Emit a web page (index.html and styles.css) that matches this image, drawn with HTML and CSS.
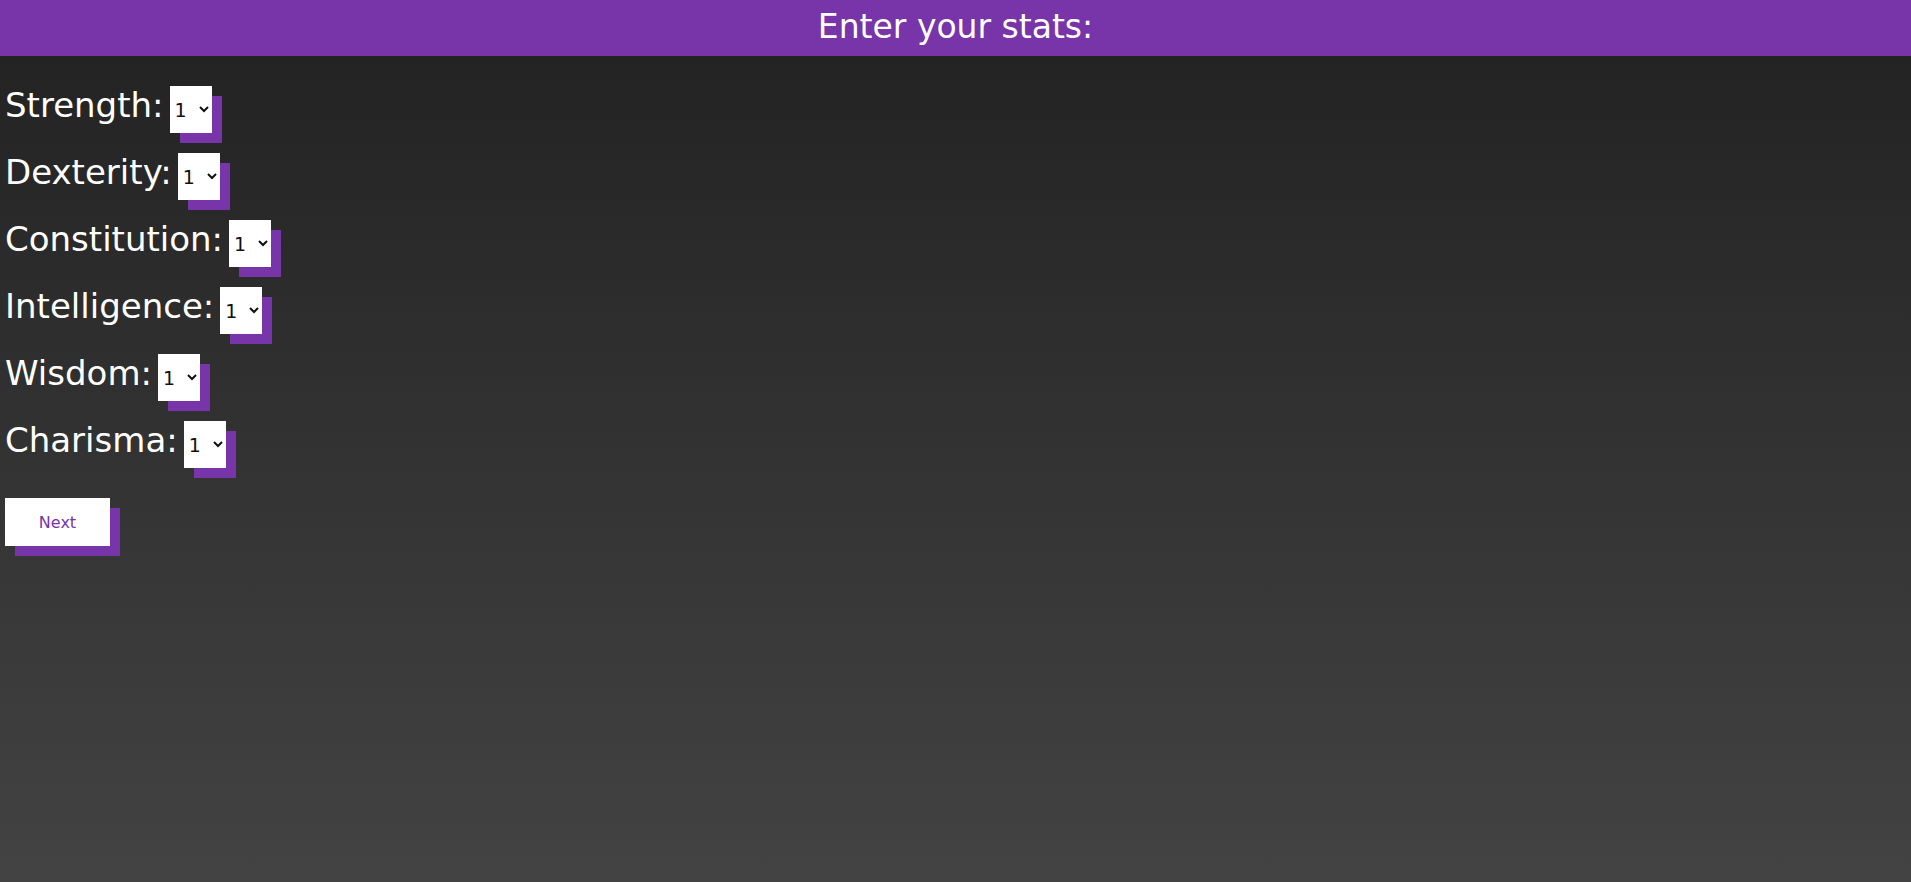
FILE: index.html
```html
<!DOCTYPE html>
<html>
<head>
<meta charset="utf-8">
<link rel="stylesheet" href="styles.css">
</head>
<body>
<header class="top-bar"><h1 class="title">Enter your stats:</h1></header>
<main class="stats-form">
  <div class="stat-row"><label class="stat-label">Strength:</label><select class="stat-select"><option>1</option></select></div>
  <div class="stat-row"><label class="stat-label">Dexterity:</label><select class="stat-select"><option>1</option></select></div>
  <div class="stat-row"><label class="stat-label">Constitution:</label><select class="stat-select"><option>1</option></select></div>
  <div class="stat-row"><label class="stat-label">Intelligence:</label><select class="stat-select"><option>1</option></select></div>
  <div class="stat-row"><label class="stat-label">Wisdom:</label><select class="stat-select"><option>1</option></select></div>
  <div class="stat-row"><label class="stat-label">Charisma:</label><select class="stat-select"><option>1</option></select></div>
  <button class="next-btn">Next</button>
</main>
</body>
</html>
```
FILE: styles.css
```css
html, body {
  margin: 0;
  height: 100%;
}
body {
  font-family: "DejaVu Sans", "Liberation Sans", sans-serif;
  background: linear-gradient(to bottom, #212121 0%, #434343 100%);
  color: #ffffff;
}
.top-bar {
  background: #7834a9;
  height: 56px;
  display: flex;
  align-items: center;
  justify-content: center;
}
.title {
  margin: 0;
  font-size: 33px;
  font-weight: normal;
  line-height: 1;
  position: relative;
  top: -2px;
}
.stats-form {
  display: flex;
  flex-direction: column;
  align-items: flex-start;
  gap: 20px;
  padding: 30px 5px;
}
.stat-row {
  display: flex;
  align-items: baseline;
  gap: 6px;
  line-height: 1;
}
.stat-label {
  font-size: 34px;
  line-height: 1;
}
.stat-select {
  width: 42px;
  height: 47px;
  font-family: "DejaVu Sans", sans-serif;
  font-size: 19px;
  color: #111;
  background: #ffffff;
  border: none;
  border-radius: 0;
  padding: 0 0 0 1px;
  box-shadow: 10px 10px 0 #7834a9;
}
.next-btn {
  margin-top: 10px;
  width: 105px;
  height: 48px;
  background: #ffffff;
  color: #7834a9;
  border: none;
  border-radius: 0;
  font-family: "DejaVu Sans", sans-serif;
  font-size: 16px;
  box-shadow: 10px 10px 0 #7834a9;
  cursor: pointer;
}
```
